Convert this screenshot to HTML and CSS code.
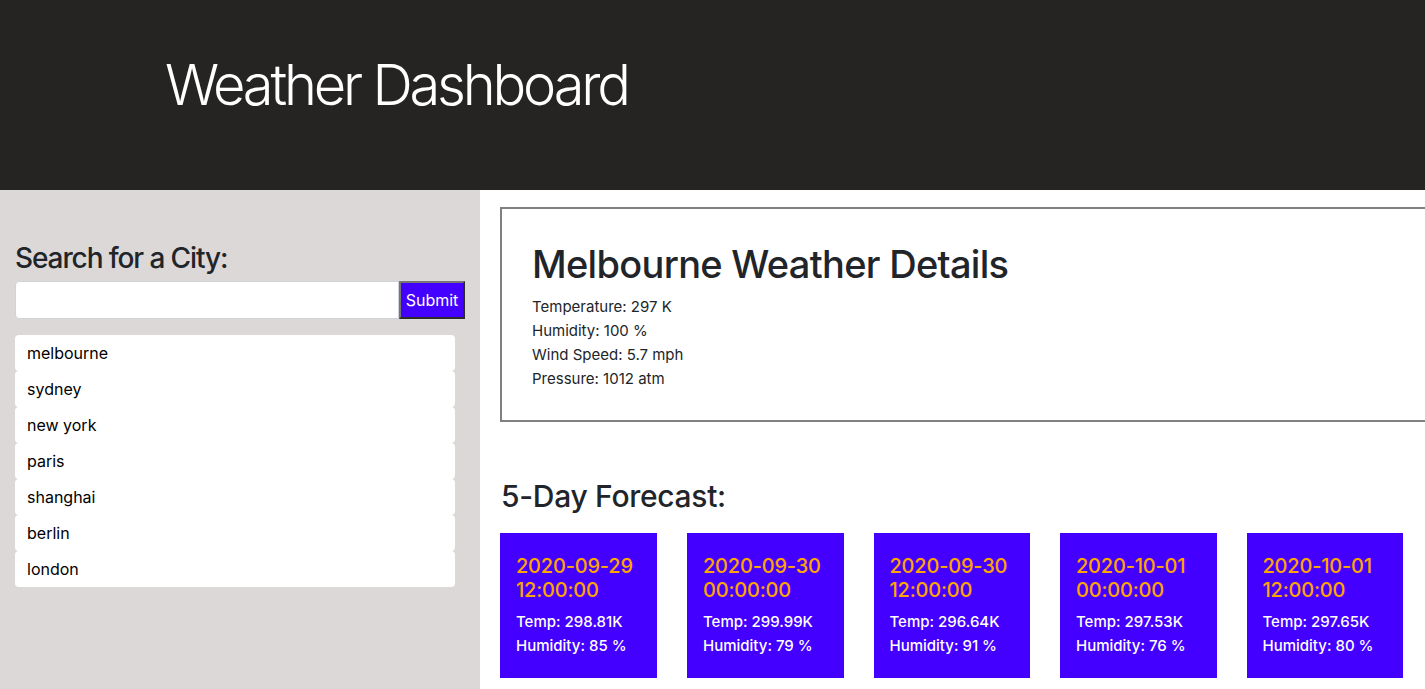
FILE: index.html
```html
<!DOCTYPE html>
<html lang="en">
<head>
<meta charset="utf-8">
<title>Weather Dashboard</title>
<link rel="stylesheet" href="styles.css">
</head>
<body>
<header class="hero">
  <h1 class="hero-title">Weather Dashboard</h1>
</header>
<div class="layout">
  <aside class="sidebar">
    <h3 class="search-title">Search for a City:</h3>
    <form class="search-form">
      <input class="search-input" type="text">
      <button class="search-btn" type="button">Submit</button>
    </form>
    <ul class="city-list">
      <li class="city">melbourne</li>
      <li class="city">sydney</li>
      <li class="city">new york</li>
      <li class="city">paris</li>
      <li class="city">shanghai</li>
      <li class="city">berlin</li>
      <li class="city">london</li>
    </ul>
  </aside>
  <main class="main">
    <section class="details">
      <h2 class="details-title">Melbourne Weather Details</h2>
      <p class="details-line">Temperature: 297 K</p>
      <p class="details-line">Humidity: 100 %</p>
      <p class="details-line">Wind Speed: 5.7 mph</p>
      <p class="details-line">Pressure: 1012 atm</p>
    </section>
    <h3 class="forecast-title">5-Day Forecast:</h3>
    <div class="forecast">
      <div class="card">
        <div class="card-date">2020-09-29 12:00:00</div>
        <div class="card-line">Temp: 298.81K</div>
        <div class="card-line">Humidity: 85 %</div>
      </div>
      <div class="card">
        <div class="card-date">2020-09-30 00:00:00</div>
        <div class="card-line">Temp: 299.99K</div>
        <div class="card-line">Humidity: 79 %</div>
      </div>
      <div class="card">
        <div class="card-date">2020-09-30 12:00:00</div>
        <div class="card-line">Temp: 296.64K</div>
        <div class="card-line">Humidity: 91 %</div>
      </div>
      <div class="card">
        <div class="card-date">2020-10-01 00:00:00</div>
        <div class="card-line">Temp: 297.53K</div>
        <div class="card-line">Humidity: 76 %</div>
      </div>
      <div class="card">
        <div class="card-date">2020-10-01 12:00:00</div>
        <div class="card-line">Temp: 297.65K</div>
        <div class="card-line">Humidity: 80 %</div>
      </div>
    </div>
  </main>
</div>
</body>
</html>
```
FILE: styles.css
```css
html, body {
  margin: 0;
  padding: 0;
  overflow: hidden;
  height: 100%;
}
body {
  font-family: Inter, "Liberation Sans", sans-serif;
  font-size: 16px;
  line-height: 24px;
  color: #212529;
  background: #ffffff;
}
.hero {
  height: 190px;
  box-sizing: border-box;
  background: #252423;
  padding: 52px 0 0 165px;
}
.hero-title {
  margin: 0;
  font-size: 56px;
  font-weight: 300;
  line-height: 1.2;
  color: #ffffff;
  letter-spacing: -3.2px;
}
.layout {
  display: flex;
  height: calc(100% - 190px);
}
.sidebar {
  width: 480px;
  flex: none;
  background: #dcd8d7;
  padding: 52px 15px 0 15px;
  box-sizing: border-box;
}
.search-title {
  margin: 0 0 5px 0;
  font-size: 28px;
  font-weight: 500;
  line-height: 1.2;
  letter-spacing: -1.1px;
}
.search-form {
  display: flex;
  margin: 0 0 16px 0;
}
.search-input {
  width: 384px;
  height: 38px;
  box-sizing: border-box;
  border: 1px solid #ced4da;
  border-radius: 4px 0 0 4px;
  background: #ffffff;
  margin: 0;
}
.search-btn {
  width: 66px;
  height: 38px;
  box-sizing: border-box;
  background: #4400ff;
  color: #ffffff;
  font-family: Inter, "Liberation Sans", sans-serif;
  font-size: 16px;
  border: 2px solid;
  border-color: #767676 #2b2b2b #2b2b2b #767676;
  padding: 0;
  margin: 0;
}
.city-list {
  list-style: none;
  margin: 0;
  padding: 0;
  width: 440px;
}
.city {
  height: 36px;
  line-height: 36px;
  padding: 0 12px;
  background: #ffffff;
  border-radius: 4px;
  color: #000000;
  font-size: 16px;
}
.main {
  flex: 1;
  padding: 17px 0 0 20px;
  min-width: 0;
}
.details {
  width: 1000px;
  border: 2px solid #808080;
  padding: 31px 30px 29px 30px;
}
.details-title {
  margin: 0 0 7px 0;
  font-size: 38px;
  font-weight: 500;
  line-height: 48px;
  letter-spacing: -0.7px;
}
.details-line {
  margin: 0;
  font-size: 15px;
  line-height: 24px;
}
.forecast-title {
  margin: 56px 0 19px 1px;
  font-size: 30px;
  font-weight: 500;
  line-height: 36px;
  letter-spacing: -0.3px;
}
.forecast {
  display: flex;
  gap: 30px;
}
.card {
  width: 157px;
  box-sizing: border-box;
  background: #4400ff;
  padding: 21px 16px 20px 16px;
  color: #ffffff;
  flex: none;
}
.card:nth-child(n+2) {
  width: 156.5px;
}
.card-date {
  color: #ffa500;
  font-size: 20px;
  font-weight: 500;
  line-height: 24px;
  margin-bottom: 8px;
  letter-spacing: -0.2px;
}
.card-line {
  font-size: 15px;
  font-weight: 500;
  line-height: 24px;
}
```
